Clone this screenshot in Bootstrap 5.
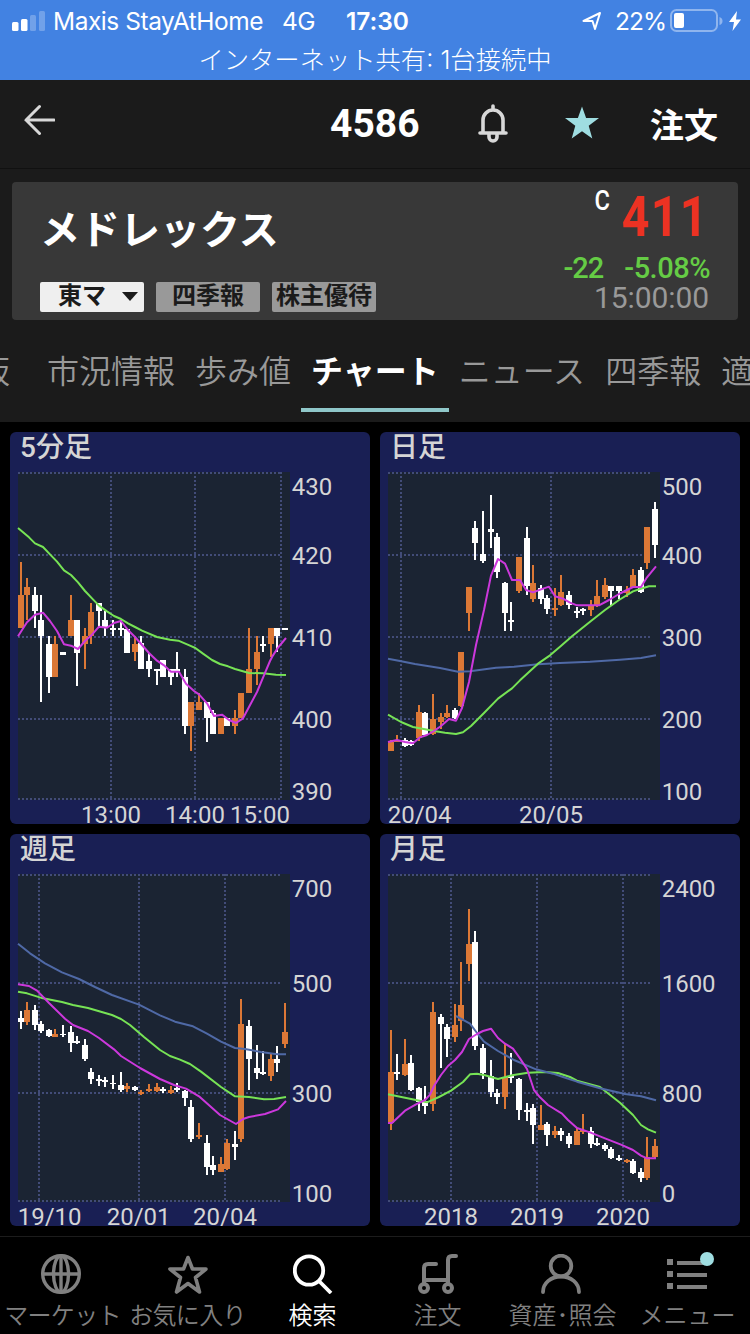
<!DOCTYPE html>
<html lang="ja">
<head>
<meta charset="utf-8">
<meta name="viewport" content="width=device-width, initial-scale=1">
<title>4586 メドレックス</title>
<link href="https://cdn.jsdelivr.net/npm/bootstrap@5.3.0/dist/css/bootstrap.min.css" rel="stylesheet">
<style>
  body { background:#000; color:#fff; width:750px; height:1334px; overflow:hidden; font-family:"Noto Sans CJK JP",Roboto,sans-serif; }
  svg { display:block; flex:none; }
  .statusbar { height:80px; background:#4282e2; font-family:Inter,"Noto Sans CJK JP",sans-serif; font-size:24.5px; line-height:42px; }
  .status-row { height:41px; padding-left:12px; padding-right:9px; }
  .carrier { margin-left:8px; width:211px; letter-spacing:-.45px; }
  .network { margin-left:18px; width:34px; letter-spacing:-.5px; }
  .clock { margin-left:30px; font-weight:600; letter-spacing:-.1px; }
  .percent { margin-left:13px; width:49px; letter-spacing:-1px; }
  .sharing { font-size:25.3px; line-height:38px; font-weight:300; }
  .topbar { height:89px; background:#1b1b1b; border-bottom:1px solid #111; padding:0 32px 0 24px; }
  .code { font:700 39px/82px Roboto,sans-serif; margin-left:275px; width:90px; }
  .order-link { font-size:34px; font-weight:700; line-height:82px; margin-left:51px; }
  .header-area { height:253px; background:#1b1b1b; padding:13px 12px 0; }
  .quote { height:138px; background:#383838; border-radius:4px; padding:0 28px; }
  .company { font-size:40px; font-weight:700; line-height:90px; height:100px; }
  .tagbox { width:104px; height:30px; border-radius:2px; background:#999; color:#1b1b1b; font-size:24px; font-weight:700; line-height:24px; }
  .tagbox.market { background:#efefef; padding-left:18px; padding-right:6px; }
  .price { font:700 55px/70px Roboto,sans-serif; color:#ec3223; letter-spacing:1.4px; height:70px; margin-right:1px; transform:scaleX(.88); transform-origin:right; }
  .price-mark { font:500 27.5px/38px Roboto,sans-serif; color:#fff; margin-right:0; transform:scaleX(.86); transform-origin:right; }
  .change { font:500 29px/32px Roboto,sans-serif; color:#65cc45; gap:21px; height:32px; letter-spacing:-.5px; }
  .change span:first-child { letter-spacing:-1px; }
  .stamp { font:400 30px/27px Roboto,sans-serif; color:#999; margin-right:1px; letter-spacing:-.1px; }
  .tabs { margin:0 -12px; height:101px; overflow:hidden; }
  .tabitem { flex:none; font-size:32px; font-weight:350; line-height:98px; height:92px; padding:0 10px; color:#999; }
  .tabitem.first { width:37px; direction:rtl; padding:0 27px 0 0; }
  .tabitem.active { color:#fff; font-weight:700; border-bottom:4px solid #8fc7c9; }
  .charts { display:grid; grid-template-columns:360px 360px; gap:10px; padding:10px; }
  .panel { height:392px; background:#191f54; border-radius:6px; overflow:hidden; }
  .panel text { font-family:Roboto,sans-serif; font-size:72px; fill:#d5d5d5; }
  .panel text.ttl { font-family:Roboto,"Noto Sans CJK JP",sans-serif; font-size:84px; font-weight:500; }
  .bottombar { height:98px; border-top:1px solid #1c1c1c; }
  .navitem { flex:1 1 0; min-width:0; color:#808080; font-size:24px; font-weight:350; line-height:36px; padding-top:17px; }
  .navitem span { margin-top:2px; white-space:nowrap; }
  .navitem span.tight { letter-spacing:-.7px; }
  .navitem.active { color:#fff; }
</style>
</head>
<body>
<div class="statusbar text-nowrap">
  <div class="status-row d-flex align-items-center">
    <svg width="33" height="20" viewBox="0 0 33 20"><g fill="#fff"><rect y="11" width="6.5" height="9" rx="1.5"/><rect x="9" y="8" width="6.5" height="12" rx="1.5"/><rect x="18" y="4" width="6" height="16" rx="1.5" opacity=".25"/><rect x="27" width="6" height="20" rx="1.5" opacity=".25"/></g></svg>
    <span class="carrier"><svg width="211" height="42" viewBox="0 0 211 42"><text x="0" y="29.500" fill="#fff" font-size="24.500" textLength="210" lengthAdjust="spacingAndGlyphs">Maxis StayAtHome</text></svg></span>
    <span class="network">4G</span>
    <span class="clock">17:30</span>
    <svg class="ms-auto" width="20" height="20" viewBox="0 0 20 20"><path d="M18 2 13 18 10.500 10 1.500 10Z" fill="none" stroke="#fff" stroke-width="2" stroke-linejoin="round"/></svg>
    <span class="percent">22%</span>
    <svg class="ms-1" width="55" height="24" viewBox="-2 0 55 24"><rect x="1" y="1" width="46" height="21" rx="5.5" fill="none" stroke="#8fb5ee" stroke-width="2"/><rect x="4" y="4" width="10" height="15" rx="2" fill="#fff"/><path d="M49.500 8q3 1 3 4t-3 4Z" fill="#8fb5ee"/></svg>
    <svg class="ms-1" width="14" height="20" viewBox="-2 0 14 20"><path d="M8 0 0 11H5L3.500 20 12 8.500H7Z" fill="#fff"/></svg>
  </div>
  <div class="sharing text-center">インターネット共有: 1台接続中</div>
</div>

<div class="topbar d-flex align-items-center text-nowrap">
  <svg class="mb-2" width="31" height="32" viewBox="0 0 31 32"><path d="M15.500 2.500 2 16 15.500 29.500M2 16H30" fill="none" stroke="#d8d8d8" stroke-width="3" stroke-linecap="round"/></svg>
  <div class="code">4586</div>
  <svg style="margin-left:57px" width="32" height="40" viewBox="0 0 32 40"><g fill="none" stroke="#d8d8d8" stroke-width="3.600" stroke-linecap="round"><path d="M16 2V6M6 28V16a10 10 0 0 1 20 0V28M3 29H29M12 30v3a4 4 0 0 0 8 0V30"/></g></svg>
  <svg class="mb-1" style="margin-left:56px" width="34" height="33" viewBox="0 0 34 32"><path d="M17 0 21.100 11.500H34L23.700 19.300 27.300 32 17 24.700 6.700 32 10.300 19.300 0 11.500H12.900Z" fill="#9fdde1"/></svg>
  <div class="order-link">注文</div>
</div>

<div class="header-area">
  <div class="quote d-flex justify-content-between text-nowrap">
    <div>
      <div class="company">メドレックス</div>
      <div class="d-flex" style="gap:12px">
        <div class="tagbox market d-flex justify-content-between"><span>東マ</span><svg class="mt-2" width="16" height="12" viewBox="0 -2 16 12"><path d="M0 0H16L8 9Z" fill="#1b1b1b"/></svg></div>
        <div class="tagbox text-center">四季報</div>
        <div class="tagbox text-center">株主優待</div>
      </div>
    </div>
    <div class="d-flex flex-column align-items-end">
      <div class="d-flex"><span class="price-mark">C</span><span class="price">411</span></div>
      <div class="change d-flex"><span>-22</span><span>-5.08%</span></div>
      <div class="stamp">15:00:00</div>
    </div>
  </div>
  <div class="tabs d-flex text-nowrap">
    <div class="tabitem first">板</div>
    <div class="tabitem">市況情報</div>
    <div class="tabitem">歩み値</div>
    <div class="tabitem active">チャート</div>
    <div class="tabitem">ニュース</div>
    <div class="tabitem">四季報</div>
    <div class="tabitem">適時開示</div>
  </div>
</div>

<main class="charts" id="charts"></main>

<nav class="bottombar d-flex">
  <div class="navitem d-flex flex-column align-items-center">
    <svg class="me-1" width="40" height="40" viewBox="0 0 40 40"><g fill="none" stroke="#808080" stroke-width="3.400"><circle cx="20" cy="20" r="18.300"/><ellipse cx="20" cy="20" rx="7.500" ry="18.300"/><path d="M20 2V38M2 20H38"/></g></svg>
    <span class="tight">マーケット</span></div>
  <div class="navitem d-flex flex-column align-items-center">
    <svg width="40" height="40" viewBox="0 0 40 40"><path d="M20 3.500 24.500 15H38L27.500 23.500 31.500 38 20 29.500 8.500 38 12.500 23.500 2 15H15.500Z" fill="none" stroke="#808080" stroke-width="3.600" stroke-linejoin="round"/></svg>
    <span class="tight">お気に入り</span></div>
  <div class="navitem active d-flex flex-column align-items-center">
    <svg width="40" height="40" viewBox="0 0 40 40"><g fill="none" stroke="#fff" stroke-width="3.800"><circle cx="16" cy="16.500" r="14.200"/><path d="M26.500 27.500 38 39"/></g></svg>
    <span>検索</span></div>
  <div class="navitem d-flex flex-column align-items-center">
    <svg width="40" height="40" viewBox="0 0 40 40"><g fill="none" stroke="#808080" stroke-width="4" stroke-linecap="round"><path d="M18 10H10Q6 10 6 14V26H30V6Q30 2 34 2H38" stroke-linejoin="round"/><path d="M6 26V29M30 26V29"/><circle cx="6" cy="34" r="4"/><circle cx="30" cy="34" r="4"/></g></svg>
    <span>注文</span></div>
  <div class="navitem d-flex flex-column align-items-center">
    <svg class="me-1" width="40" height="40" viewBox="0 0 40 40"><g fill="none" stroke="#808080" stroke-width="3.800" stroke-linecap="round"><circle cx="20" cy="12" r="10.300"/><path d="M2 38C2 29 10 22.500 20 22.500S38 29 38 38"/></g></svg>
    <span>資産･照会</span></div>
  <div class="navitem d-flex flex-column align-items-center">
    <svg width="48" height="42" viewBox="0 0 48 42" style="margin:-2px 0 0 6px"><g fill="#808080"><path d="M0 7h6v6H0zM10 9h30v4H10zM0 19h6v6H0zM10 21h30v4H10zM0 31h6v6H0zM10 33h30v4H10z"/></g><circle cx="40" cy="7" r="7" fill="#9fdde1"/></svg>
    <span>メニュー</span></div>
</nav>

<script src="https://cdn.jsdelivr.net/npm/bootstrap@5.3.0/dist/js/bootstrap.bundle.min.js"></script>
<script>
// Candle centres shared by every chart; chart units are thirds of a pixel.
const XS=[33,51,75,93,117,135,159,183,201,225,243,267,285,309,333,351,375,393,417,441,459,483,501,525,543,567,591,609,633,651,675,693,717,741,759,783,801,825];
// Each candle: high, body top, body bottom, low, o(range) or w(hite).
const CHARTS=[
{title:'5分足',rows:[129,375,621,867,1107],cols:[303,555,813],
 y:[['430',195],['420',402],['410',648],['400',894],['390',1110]],x:[['13:00',303],['14:00',555],['15:00',750]],
 c:`396,495,593,593,o 445,470,495,570,o 470,495,543,593,w 495,570,618,815,w 618,643,740,790,w 618,643,740,740,o 667,667,674,674,w 495,570,618,618,o 570,570,668,767,w 593,618,643,717,o 520,545,618,643,o 520,520,543,590,w 543,570,594,618,w 570,594,600,618,w 570,594,600,618,w 597,597,668,668,w 618,643,667,692,o 618,640,717,717,w 668,692,717,741,w 716,716,722,766,w 691,691,741,741,w 716,716,741,766,w 667,716,722,741,w 717,741,888,913,w 815,815,888,962,o 790,815,839,839,o 815,815,864,937,w 839,850,913,913,w 864,864,913,913,o 864,864,888,888,w 839,864,888,913,o 790,790,864,864,o 594,717,790,790,o 618,667,717,766,o 618,642,649,667,w 594,594,642,680,o 594,594,618,667,w 594,594,600,600,w`,
 l:[['#77e355','24,294 57,322 75,340 99,351 120,373 141,395 162,421 183,435 204,457 225,483 246,505 267,527 291,544 312,558 333,567 354,580 375,591 396,602 441,621 480,629 505,632 540,647 556,654 579,671 606,690 630,702 654,709 675,717 717,729 759,730 798,734 828,735'],
    ['#cc38dc','24,619 51,577 75,554 99,548 120,573 141,603 162,643 183,647 204,657 225,633 246,614 267,590 291,593 312,579 333,573 354,600 375,621 396,645 417,669 441,692 462,706 483,725 507,725 528,761 552,783 567,793 591,820 612,858 636,854 657,870 678,879 699,865 717,831 741,786 759,743 780,693 789,676 804,653 828,624']]},
{title:'日足',rows:[129,375,621,867,1107],cols:[63,513],
 y:[['500',195],['400',402],['300',648],['200',894],['100',1110]],x:[['20/04',119],['20/05',513]],
 c:`930,935,962,962,o 915,932,935,937,o 925,930,948,950,w 930,934,946,948,w 825,847,925,932,o 846,849,915,918,w 792,867,912,914,o 849,862,876,897,o 826,850,861,864,o 834,839,864,867,w 666,667,829,831,o 470,470,549,602,o 273,293,338,389,w 243,372,394,398,w 196,297,307,353,w 308,320,426,443,w 457,460,549,603,w 516,570,577,603,w 381,382,483,489,o 291,325,467,494,w 405,458,507,515,o 465,473,506,522,w 495,503,537,551,w 474,533,541,557,o 435,487,525,528,o 484,495,526,537,w 531,544,550,563,w 534,538,544,554,w 510,526,540,557,o 450,498,528,530,o 444,465,500,507,o 468,468,483,527,w 468,468,484,507,w 468,480,488,500,o 417,435,470,472,o 411,420,486,490,w 291,291,398,416,o 216,237,345,383,w`,
 l:[['#4f69a6','24,686 60,693 105,702 180,714 234,725 270,724 348,713 402,710 474,703 540,699 630,695 720,689 783,684 828,676'],
    ['#77e355','24,854 63,876 99,891 135,898 162,903 195,908 228,912 249,907 273,888 312,849 354,806 396,775 420,751 474,701 510,676 540,650 576,619 633,573 675,540 717,510 759,484 780,477 807,469 828,469'],
    ['#cc38dc','24,936 51,930 75,936 99,940 120,922 141,915 162,903 183,888 207,867 228,872 246,834 267,756 288,645 312,540 333,437 354,387 375,401 396,450 420,450 438,480 459,487 483,478 507,470 525,499 549,506 570,518 591,526 633,526 657,526 687,510 717,492 759,471 783,471 801,442 828,409']]},
{title:'週足',rows:[129,453,783,1107],cols:[87,387,645],
 y:[['700',195],['500',480],['300',810],['100',1110]],x:[['19/10',119],['20/01',386],['20/04',645]],
 c:`537,559,570,591,w 510,533,570,579,o 519,534,578,595,w 567,575,598,603,w 590,595,612,615,w 590,605,614,614,o 578,605,610,615,w 582,600,634,659,w 612,627,633,636,w 621,638,682,687,w 708,719,741,755,w 729,742,748,762,w 736,743,750,766,w 730,752,757,770,w 720,760,774,780,w 754,762,772,780,o 762,764,774,777,w 774,779,787,790,o 756,772,778,780,o 754,766,776,780,o 765,770,776,783,w 762,773,783,785,o 754,767,774,780,w 774,777,799,822,w 804,826,920,930,w 872,908,914,921,o 908,934,1004,1028,w 972,1000,1014,1028,w 975,995,1019,1020,o 920,934,1010,1014,o 897,935,945,983,w 501,576,922,931,o 564,583,682,773,w 640,708,723,741,w 658,720,726,728,w 667,681,732,746,o 643,682,693,721,w 514,600,635,648,o`,
 l:[['#4f69a6','24,335 60,364 105,394 156,421 207,441 255,465 306,489 387,518 450,550 495,569 549,583 591,605 633,629 675,648 705,651 753,660 801,667 828,667'],
    ['#77e355','24,479 51,484 99,499 156,510 189,519 234,528 306,549 333,561 360,579 402,615 450,654 480,672 510,683 540,696 573,719 633,765 675,793 717,795 762,802 792,801 828,795'],
    ['#cc38dc','24,457 57,462 81,476 117,513 165,560 189,579 234,597 267,618 312,652 333,672 390,708 450,741 492,759 528,770 567,793 630,849 678,876 699,861 717,855 765,846 804,832 828,807']]},
{title:'月足',rows:[129,453,783,1107],cols:[213,471,729],
 y:[['2400',195],['1600',480],['800',810],['0',1110]],x:[['2018',213],['2019',471],['2020',729]],
 c:`595,720,872,893,o 667,719,726,744,w 620,696,728,731,o 670,693,773,777,w 766,768,811,837,w 762,808,822,847,w 509,540,815,838,o 547,556,577,708,w 575,584,621,675,w 517,579,615,629,o 391,520,568,597,o 232,335,396,446,o 297,331,642,654,w 637,647,722,741,w 684,731,779,796,w 772,782,795,816,w 633,734,794,832,o 663,732,738,754,w 738,742,833,864,w 813,834,840,868,w 815,829,880,935,w 819,880,893,895,o 870,877,909,942,w 882,898,908,918,o 888,898,910,926,w 903,911,936,947,w 888,896,938,940,o 846,895,901,906,o 885,896,936,948,w 918,933,938,942,w 932,938,950,957,w 945,951,978,982,w 970,977,985,987,w 980,984,990,992,o 981,987,1022,1025,w 1009,1020,1038,1049,w 916,975,1038,1043,o 920,942,975,980,o`,
 l:[['#77e355','24,787 75,797 141,811 177,795 213,776 249,750 270,727 291,725 315,730 354,741 396,730 444,722 495,720 534,723 570,735 591,746 660,765 720,812 759,849 783,879 804,892 828,902'],
    ['#4f69a6','228,552 270,575 291,603 312,629 354,657 402,684 468,712 519,725 549,735 591,749 660,769 735,786 783,793 828,805'],
    ['#cc38dc','24,873 36,873 75,836 108,817 135,804 150,788 162,762 183,729 204,702 225,684 246,660 267,621 291,606 309,597 333,590 354,618 375,635 399,650 420,679 441,711 462,774 480,796 504,819 546,845 564,864 591,888 630,901 675,919 723,938 759,954 783,971 801,979 828,979']]}
];
document.getElementById('charts').innerHTML=CHARTS.map(d=>{
  let s=`<svg width="360" height="392" viewBox="0 6 1080 1176"><rect x="24" y="126" width="816" height="984" fill="#1b2433"/><g stroke="#424c78" stroke-width="6" stroke-dasharray="6 6">`;
  s+=d.rows.map(y=>`<path d="M24 ${y}H810"/>`).join('')+d.cols.map(x=>`<path d="M${x} 126V1110"/>`).join('')+'</g><g shape-rendering="crispEdges">';
  d.c.split(' ').forEach((t,i)=>{const [h,a,b,l,k]=t.split(','),x=XS[i];
    s+=`<path fill="${k=='o'?'#dc7836':'#fff'}" d="M${x-3} ${h}h6V${l}h-6zM${x-9} ${a}h18V${b}h-18z"/>`;});
  s+='</g>'+d.l.map(([c,p])=>`<polyline points="${p}" fill="none" stroke="${c}" stroke-width="6" stroke-linejoin="round"/>`).join('');
  s+=`<text class="ttl" x="30" y="82">${d.title}</text>`;
  s+=d.y.map(([t,y])=>`<text x="845" y="${y}">${t}</text>`).join('')+d.x.map(([t,x])=>`<text x="${x}" y="1179" text-anchor="middle">${t}</text>`).join('');
  return `<section class="panel">${s}</svg></section>`;}).join('');
</script>
</body>
</html>
